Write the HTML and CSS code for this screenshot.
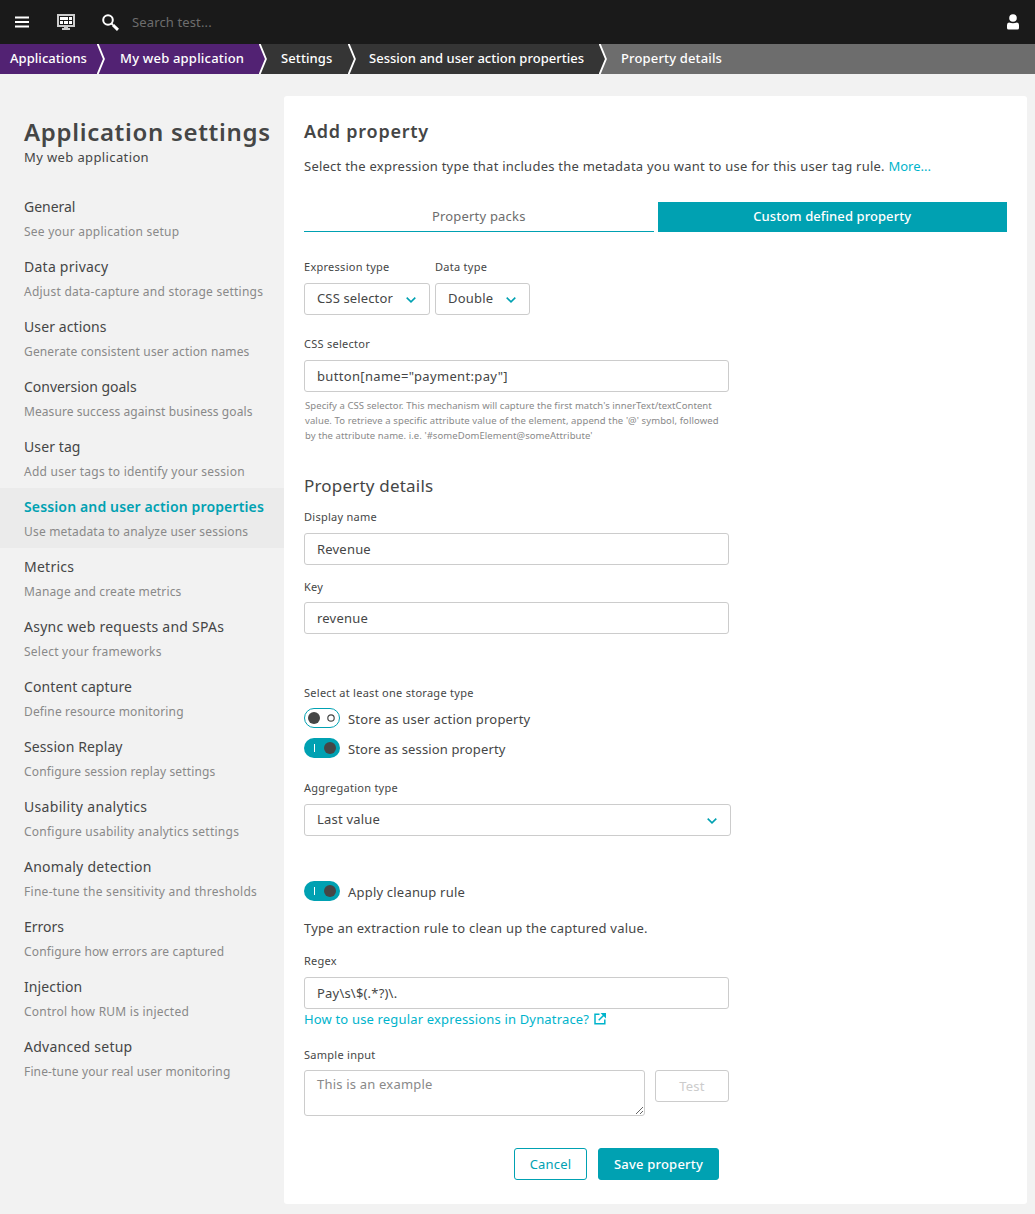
FILE: index.html
```html
<!DOCTYPE html>
<html lang="en">
<head>
<meta charset="utf-8">
<title>Application settings</title>
<link rel="stylesheet" href="styles.css">
</head>
<body>
<header class="topbar">
  <svg class="icon-menu" width="14" height="12" viewBox="0 0 14 12"><path d="M0 1.5h14M0 6h14M0 10.5h14" stroke="#fff" stroke-width="2"/></svg>
  <svg class="icon-dashboard" width="18" height="16" viewBox="0 0 18 16"><path d="M1 1h16v11H1z" fill="none" stroke="#ccc" stroke-width="2"/><path d="M3 3h8v3H3zM12 3h3v3h-3zM3 7h3v3H3zM7 7h4v3H7zM12 7h3v3h-3z" fill="#fff"/><path d="M7 12h4v2h2v2H5v-2h2z" fill="#ccc"/></svg>
  <svg class="icon-search" width="17" height="17" viewBox="0 0 17 17" fill="none" stroke="#fff"><circle cx="6" cy="6" r="4.8" stroke-width="2"/><path d="M9.5 9.5l1.5 1.5" stroke-width="1.8"/><path d="M11 11l5 4.800" stroke-width="3"/></svg>
  <input class="search" type="text" placeholder="Search test..." aria-label="Search">
  <svg class="icon-user" width="12" height="16" viewBox="0 0 12 16" fill="#fff"><circle cx="6" cy="4" r="3.800"/><path d="M2 8.600q4 1.200 8 0Q12 8.800 12 11v3q0 1.600-1.600 1.600H1.600Q0 15.600 0 14v-3q0-2.200 2-2.400z"/></svg>
</header>

<nav class="crumbs">
  <a class="crumb crumb-app crumb-first">Applications</a>
  <svg class="crumb-sep sep-app" width="8" height="30" viewBox="0 0 8 30"><path class="left" d="M0 0l7 15-7 15z"/><path class="line" d="M.5-.5L6.900 15 .5 30.500"/></svg>
  <a class="crumb crumb-app crumb-second">My web application</a>
  <svg class="crumb-sep sep-app-dark" width="8" height="30" viewBox="0 0 8 30"><path class="left" d="M0 0l7 15-7 15z"/><path class="line" d="M.5-.5L6.900 15 .5 30.500"/></svg>
  <a class="crumb crumb-dark crumb-third">Settings</a>
  <svg class="crumb-sep sep-dark" width="8" height="30" viewBox="0 0 8 30"><path class="left" d="M0 0l7 15-7 15z"/><path class="line" d="M.5-.5L6.900 15 .5 30.500"/></svg>
  <a class="crumb crumb-dark crumb-fourth">Session and user action properties</a>
  <svg class="crumb-sep sep-dark-gray" width="8" height="30" viewBox="0 0 8 30"><path class="left" d="M0 0l7 15-7 15z"/><path class="line" d="M.5-.5L6.900 15 .5 30.500"/></svg>
  <a class="crumb crumb-last">Property details</a>
</nav>

<div class="layout">
  <aside class="sidebar">
    <h1>Application settings</h1>
    <p class="app-name">My web application</p>
    <ul class="menu">
      <li><b class="tight">General</b><span>See your application setup</span></li>
      <li><b>Data privacy</b><span>Adjust data-capture and storage settings</span></li>
      <li><b class="snug">User actions</b><span class="snug">Generate consistent user action names</span></li>
      <li><b class="tight">Conversion goals</b><span class="tight">Measure success against business goals</span></li>
      <li><b class="snug">User tag</b><span>Add user tags to identify your session</span></li>
      <li class="active"><b>Session and user action properties</b><span>Use metadata to analyze user sessions</span></li>
      <li><b>Metrics</b><span class="snug">Manage and create metrics</span></li>
      <li><b>Async web requests and SPAs</b><span>Select your frameworks</span></li>
      <li><b class="snug">Content capture</b><span class="snug">Define resource monitoring</span></li>
      <li><b class="snug">Session Replay</b><span class="snug">Configure session replay settings</span></li>
      <li><b class="loose">Usability analytics</b><span>Configure usability analytics settings</span></li>
      <li><b>Anomaly detection</b><span class="loose">Fine-tune the sensitivity and thresholds</span></li>
      <li><b class="tight">Errors</b><span class="snug">Configure how errors are captured</span></li>
      <li><b class="snug">Injection</b><span>Control how RUM is injected</span></li>
      <li><b>Advanced setup</b><span class="snug">Fine-tune your real user monitoring</span></li>
    </ul>
  </aside>

  <main class="card">
    <h2>Add property</h2>
    <p class="intro">Select the expression type that includes the metadata you want to use for this user tag rule. <a class="link">More...</a></p>

    <div class="tabs">
      <button class="tab">Property packs</button>
      <button class="tab tab-active">Custom defined property</button>
    </div>

    <div class="selectors">
      <div>
        <label>Expression type</label>
        <div class="select select-expression">CSS selector<svg width="10" height="6" viewBox="0 0 10 6"><path d="M.7.7L5 4.800 9.300.700"/></svg></div>
      </div>
      <div>
        <label>Data type</label>
        <div class="select select-data">Double<svg width="10" height="6" viewBox="0 0 10 6"><path d="M.7.7L5 4.800 9.300.700"/></svg></div>
      </div>
    </div>

    <label class="label-css" for="css">CSS selector</label>
    <input class="field field-css" id="css" type="text" value="button[name=&quot;payment:pay&quot;]">
    <p class="hint">Specify a CSS selector. This mechanism will capture the first match's innerText/textContent<br><span>value. To retrieve a specific attribute value of the element, append the '@' symbol, followed</span><br>by the attribute name. i.e. '#someDomElement@someAttribute'</p>

    <h3>Property details</h3>
    <label for="name">Display name</label>
    <input class="field" id="name" type="text" value="Revenue">
    <label class="label-key" for="key">Key</label>
    <input class="field field-key" id="key" type="text" value="revenue">

    <label class="label-storage">Select at least one storage type</label>
    <div class="switch-row row-action">
      <svg width="36" height="20" viewBox="0 0 36 20"><rect x=".5" y=".5" width="35" height="19" rx="9.500" fill="#fff" stroke="#00a1b2"/><circle cx="10" cy="10" r="6" fill="#454646"/><circle cx="27" cy="10" r="3.200" fill="none" stroke="#454646" stroke-width="1.200"/></svg>
      <span>Store as user action property</span>
    </div>
    <div class="switch-row row-session">
      <svg width="36" height="20" viewBox="0 0 36 20"><rect width="36" height="20" rx="10" fill="#00a1b2"/><path d="M10.500 6v8" stroke="#fff"/><circle cx="26" cy="10" r="6" fill="#454646"/></svg>
      <span>Store as session property</span>
    </div>

    <label class="label-aggregation">Aggregation type</label>
    <div class="select select-aggregation">Last value<svg width="10" height="6" viewBox="0 0 10 6"><path d="M.7.7L5 4.800 9.300.700"/></svg></div>

    <div class="switch-row row-cleanup">
      <svg width="36" height="20" viewBox="0 0 36 20"><rect width="36" height="20" rx="10" fill="#00a1b2"/><path d="M10.500 6v8" stroke="#fff"/><circle cx="26" cy="10" r="6" fill="#454646"/></svg>
      <span>Apply cleanup rule</span>
    </div>
    <p class="rule">Type an extraction rule to clean up the captured value.</p>

    <label class="label-regex" for="regex">Regex</label>
    <input class="field" id="regex" type="text" value="Pay\s\$(.*?)\.">
    <a class="link help">How to use regular expressions in Dynatrace?<svg width="12" height="12" viewBox="0 0 12 12" fill="none" stroke="currentColor" stroke-width="1.500"><path d="M5.500 1.200H1v9.600h9.800V6.500"/><path d="M4.700 7.300L10 2"/><path d="M6.500 0H12v5.500z" fill="currentColor" stroke="none"/></svg></a>

    <label class="label-sample" for="sample">Sample input</label>
    <div class="sample-row">
      <textarea id="sample" placeholder="This is an example"></textarea>
      <button class="button button-disabled" disabled>Test</button>
    </div>

    <div class="actions">
      <button class="button button-cancel">Cancel</button>
      <button class="button button-save">Save property</button>
    </div>
  </main>
</div>
</body>
</html>
```
FILE: styles.css
```css
* { box-sizing: border-box; }

body {
  margin: 0;
  min-height: 1214px;
  background: #f2f2f2;
  color: #454646;
  font: 13px/20px "Noto Sans", sans-serif;
  letter-spacing: 0.2px;
}

h1, h2, h3, p, ul { margin: 0; padding: 0; }
input, button, textarea { font: inherit; letter-spacing: inherit; color: inherit; }
svg { display: block; flex: none; }

.topbar {
  display: flex;
  align-items: center;
  height: 44px;
  padding: 0 16px 0 15px;
  background: #1a1a1a;
}
.icon-dashboard { margin-left: 28px; }
.icon-search { margin-left: 27px; }
.search {
  flex: 1;
  height: 30px;
  margin-left: 13px;
  padding: 0;
  border: 0;
  background: none;
  outline: none;
}
.search::placeholder { color: #6d6d6d; letter-spacing: 0.13px; }

.crumbs {
  display: flex;
  height: 30px;
  color: #fff;
  font-weight: 500;
  line-height: 28px;
  white-space: nowrap;
}
.crumb-app { background: #522273; }
.crumb-dark { background: #353535; }
.crumb-first { width: 97px; padding-left: 10px; letter-spacing: 0.05px; }
.crumb-second { width: 154px; padding-left: 15px; }
.crumb-third { width: 81px; padding-left: 14px; letter-spacing: 0.1px; }
.crumb-fourth { width: 243px; padding-left: 13px; letter-spacing: 0.02px; }
.crumb-last { flex: 1; padding-left: 14px; background: #6d6d6d; letter-spacing: 0.15px; }
.crumb-sep .line { fill: none; stroke: #fff; stroke-width: 1.9; }
.sep-app { background: #522273; }
.sep-app .left, .sep-app-dark .left { fill: #522273; }
.sep-app-dark, .sep-dark { background: #353535; }
.sep-dark .left, .sep-dark-gray .left { fill: #353535; }
.sep-dark-gray { background: #6d6d6d; }

.layout { display: flex; align-items: flex-start; }

.sidebar { width: 284px; padding-top: 42px; }
.sidebar h1 {
  padding-left: 24px;
  font-size: 24px;
  font-weight: 600;
  line-height: 32px;
  letter-spacing: 0.68px;
  white-space: nowrap;
}
.app-name { margin-top: -1px; padding-left: 24px; letter-spacing: 0.38px; }
.menu { margin-top: 21px; list-style: none; }
.menu li { height: 60px; padding: 8px 0 0 24px; white-space: nowrap; }
.menu b { display: block; font-size: 14px; font-weight: 400; line-height: 21px; letter-spacing: 0.25px; }
.menu span { display: block; margin-top: 5px; color: #898989; font-size: 12px; line-height: 19px; letter-spacing: 0.24px; }
.menu b.tight { letter-spacing: -0.03px; }
.menu b.snug { letter-spacing: 0.1px; }
.menu b.loose { letter-spacing: 0.32px; }
.menu span.tight { letter-spacing: 0.08px; }
.menu span.snug { letter-spacing: 0.15px; }
.menu span.loose { letter-spacing: 0.29px; }
.menu .active { background: #ebebeb; }
.menu .active b { color: #00a1b2; font-weight: 600; letter-spacing: 0.14px; }
.menu .active span { letter-spacing: 0.18px; }

.card {
  width: 743px;
  height: 1108px;
  margin-top: 22px;
  padding: 24px 20px;
  border-radius: 3px;
  background: #fff;
}
.card h2 { font-size: 18px; font-weight: 600; line-height: 22px; letter-spacing: 0.75px; }
.intro { margin-top: 14px; letter-spacing: 0.24px; }
.intro .link { letter-spacing: 0; }
.link { color: #00b4cc; }

.tabs { display: flex; gap: 4px; margin-top: 26px; }
.tab {
  flex: 1;
  height: 30px;
  padding: 0 0 1px;
  border: 0;
  border-bottom: 1px solid #00a1b2;
  background: none;
  color: #6d6d6d;
}
.tab-active { background: #00a1b2; color: #fff; font-weight: 500; letter-spacing: 0.08px; }

.selectors { display: flex; gap: 5px; margin: 27px 0 21px; }
label { display: block; margin-bottom: 8px; font-size: 11px; line-height: 16px; letter-spacing: 0.27px; }

.select {
  display: flex;
  align-items: center;
  justify-content: space-between;
  height: 32px;
  padding: 0 13px 2px 12px;
  border: 1px solid #ccc;
  border-radius: 3px;
}
.select svg { margin-top: 3px; fill: none; stroke: #00a1b2; stroke-width: 1.6; }
.select-expression { width: 126px; letter-spacing: 0.14px; }
.select-data { width: 95px; }
.select-aggregation { width: 427px; }

.field {
  display: block;
  width: 425px;
  height: 32px;
  padding: 0 12px;
  border: 1px solid #ccc;
  border-radius: 3px;
  background: #fff;
}
.field-css { letter-spacing: 0.33px; }
.hint { margin-top: 6px; padding-left: 1px; color: #898989; font-size: 9.5px; line-height: 15px; letter-spacing: 0.07px; white-space: nowrap; }
.hint span { letter-spacing: 0.1px; }

.card h3 { margin: 31px 0 11px; font-size: 17px; font-weight: 400; line-height: 24px; letter-spacing: 0.2px; }
.label-key { margin-top: 14px; margin-bottom: 7px; }
.label-storage { margin-top: 51px; margin-bottom: 7px; }

.switch-row { display: flex; gap: 8px; height: 20px; }
.switch-row span { padding-top: 1px; }
.row-session { margin-top: 10px; letter-spacing: 0.14px; }
.label-aggregation { margin-top: 22px; }
.row-cleanup { margin-top: 45px; }
.rule { margin-top: 17px; letter-spacing: 0.22px; }
.label-regex { margin-top: 15px; }

.help { display: flex; align-items: center; gap: 5px; letter-spacing: 0.165px; }

.label-sample { margin-top: 18px; margin-bottom: 7px; }
.sample-row { display: flex; align-items: flex-start; gap: 10px; }
.sample-row textarea {
  width: 341px;
  height: 46px;
  padding: 3px 12px;
  border: 1px solid #ccc;
  border-radius: 3px;
  overflow: hidden;
}
.sample-row textarea::placeholder { color: #898989; }

.button { height: 32px; padding: 0; border: 1px solid #00a1b2; border-radius: 3px; background: #fff; }
.button-disabled { width: 74px; border-color: #ccc; color: #ccc; }
.actions { display: flex; gap: 11px; margin: 32px 0 0 210px; }
.button-cancel { width: 73px; color: #00a1b2; }
.button-save { width: 121px; background: #00a1b2; color: #fff; font-weight: 500; }
```
